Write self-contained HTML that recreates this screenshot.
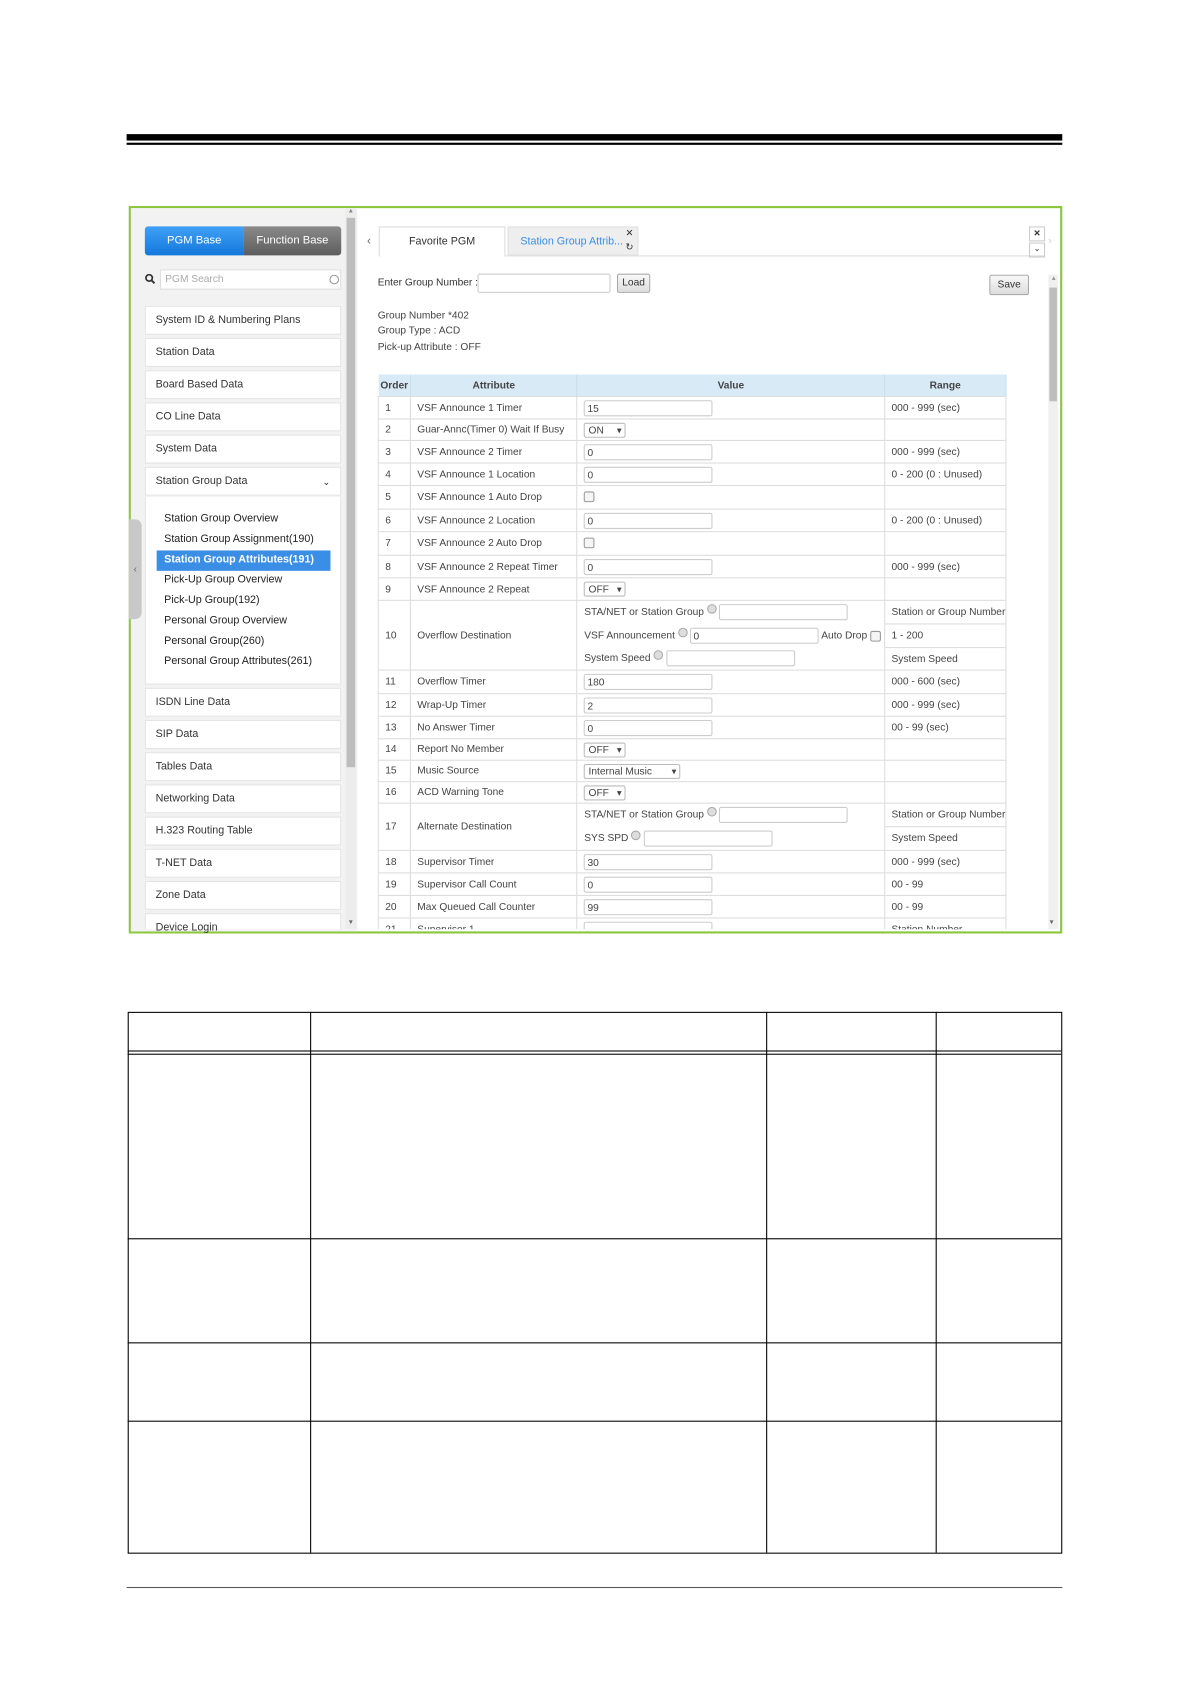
<!DOCTYPE html>
<html><head><meta charset="utf-8"><style>
html,body{margin:0;padding:0;background:#fff;width:1191px;height:1684px;overflow:hidden}
.s{position:absolute;left:0;top:0;width:1110px;height:1570px;transform:scale(1.073);transform-origin:0 0;font-family:"Liberation Sans",Arial,sans-serif;color:#333}
.a{position:absolute}
.mi{position:absolute;left:135px;width:183px;height:27px;background:#fff;border:1px solid #e4e4e4;box-sizing:border-box;font-size:10px;line-height:26px;padding-left:9px;color:#333}
.sub{position:absolute;left:153px;font-size:10px;color:#222}
table.t{position:absolute;left:352px;top:349px;border-collapse:collapse;font-size:9.5px;color:#444;table-layout:fixed}
table.t td{border:1px solid #ddd;padding:0 0 0 6px;white-space:nowrap;overflow:hidden}
table.t th{background:#d9eaf7;font-weight:bold;font-size:9.5px;height:18px;border-right:1px solid #c9dbe8}
.in{display:inline-block;width:120px;height:15px;border:1px solid #ccc;border-radius:2px;vertical-align:middle;font-size:9.5px;line-height:15px;padding-left:2px;box-sizing:border-box;background:#fff}
.sel{display:inline-block;width:39px;height:14px;border:1px solid #bbb;border-radius:2px;vertical-align:middle;font-size:9.5px;line-height:13px;padding-left:3px;box-sizing:border-box;position:relative}
.sel:after{content:"▾";position:absolute;right:3px;top:0;font-size:9px}
.cb{display:inline-block;width:8px;height:8px;border:1px solid #999;border-radius:2px;vertical-align:middle;background:#f5f5f5}
.rd{display:inline-block;width:7px;height:7px;border:1px solid #aaa;border-radius:50%;background:#ddd;vertical-align:top}
.bt{position:absolute;border:1px solid #aaa;background:linear-gradient(#f8f8f8,#ddd);font-size:9.5px;text-align:center;box-sizing:border-box;border-radius:2px}
</style></head><body><div class="s">
<div class="a" style="left:118px;top:125px;width:872px;height:6px;background:#000"></div>
<div class="a" style="left:118px;top:133px;width:872px;height:2px;background:#000"></div>

<div class="a" style="left:120px;top:192px;width:866px;height:674px;border:2px solid #8dc63f;background:#fff"></div>
<div class="a" style="left:122px;top:194px;width:211px;height:674px;background:#f2f2f2"></div>
<div class="a" style="left:120px;top:484px;width:12px;height:93px;background:#c8c8c8;border-radius:0 6px 6px 0;font-size:9px;color:#666;line-height:93px;text-align:center">‹</div>
<div class="a" style="left:322px;top:194px;width:10px;height:672px;background:#ececec"></div>
<div class="a" style="left:323px;top:203px;width:8px;height:512px;background:#bdbdbd"></div>
<div class="a" style="left:324px;top:194px;font-size:6px;color:#888">▲</div>
<div class="a" style="left:324px;top:857px;font-size:6px;color:#666">▼</div>

<div class="a" style="left:135px;top:211px;width:92px;height:27px;background:linear-gradient(#3fa0f5,#1478dc);border-radius:3px 0 0 3px;color:#fff;font-size:10.5px;line-height:27px;text-align:center">PGM Base</div>
<div class="a" style="left:227px;top:211px;width:91px;height:27px;background:linear-gradient(#8a8a8a,#5d5d5d);border-radius:0 3px 3px 0;color:#fff;font-size:10.5px;line-height:27px;text-align:center">Function Base</div>

<svg class="a" style="left:135px;top:255px" width="10" height="10" viewBox="0 0 10 10"><circle cx="4" cy="4" r="3" fill="none" stroke="#333" stroke-width="1.6"/><path d="M6 6L9 9" stroke="#333" stroke-width="1.8"/></svg>
<div class="a" style="left:149px;top:251px;width:169px;height:19px;background:#fff;border:1px solid #ddd;box-sizing:border-box;font-size:9.5px;line-height:18px;color:#aaa;padding-left:4px">PGM Search</div>
<div class="a" style="left:307px;top:256px;width:7px;height:7px;border:1.5px solid #999;border-radius:50%"></div>

<div class="mi" style="top:285px">System ID &amp; Numbering Plans</div>
<div class="mi" style="top:315px">Station Data</div>
<div class="mi" style="top:345px">Board Based Data</div>
<div class="mi" style="top:375px">CO Line Data</div>
<div class="mi" style="top:405px">System Data</div>
<div class="mi" style="top:435px">Station Group Data<span style="position:absolute;right:9px;top:0;font-size:9px">⌄</span></div>
<div class="a" style="left:135px;top:463px;width:183px;height:175px;background:#fff;border:1px solid #e4e4e4;border-top:none;box-sizing:border-box"></div>
<div class="sub" style="top:478px">Station Group Overview</div>
<div class="sub" style="top:497px">Station Group Assignment(190)</div>
<div class="a" style="left:146px;top:513px;width:162px;height:19px;background:#3a8ee6"></div>
<div class="sub" style="top:516px;color:#fff;font-weight:bold">Station Group Attributes(191)</div>
<div class="sub" style="top:535px">Pick-Up Group Overview</div>
<div class="sub" style="top:554px">Pick-Up Group(192)</div>
<div class="sub" style="top:573px">Personal Group Overview</div>
<div class="sub" style="top:592px">Personal Group(260)</div>
<div class="sub" style="top:611px">Personal Group Attributes(261)</div>
<div class="mi" style="top:641px">ISDN Line Data</div>
<div class="mi" style="top:671px">SIP Data</div>
<div class="mi" style="top:701px">Tables Data</div>
<div class="mi" style="top:731px">Networking Data</div>
<div class="mi" style="top:761px">H.323 Routing Table</div>
<div class="mi" style="top:791px">T-NET Data</div>
<div class="mi" style="top:821px">Zone Data</div>
<div class="mi" style="top:851px;height:15px;border-bottom:none">Device Login</div>

<div class="a" style="left:342px;top:219px;font-size:11px;color:#666">‹</div>
<div class="a" style="left:353px;top:238px;width:620px;height:1px;background:#ddd"></div>
<div class="a" style="left:353px;top:211px;width:118px;height:28px;background:#fff;border:1px solid #ddd;border-bottom:none;box-sizing:border-box;font-size:10px;line-height:27px;text-align:center;color:#333">Favorite PGM</div>
<div class="a" style="left:473px;top:211px;width:122px;height:27px;background:#eee;border:1px solid #e2e2e2;box-sizing:border-box;font-size:10px;line-height:27px;padding-left:11px;color:#3a8ee6">Station Group Attrib...</div>
<div class="a" style="left:583px;top:212px;font-size:9px;color:#333">✕</div>
<div class="a" style="left:583px;top:225px;font-size:9px;color:#333">↻</div>
<div class="a" style="left:959px;top:211px;width:13px;height:12px;border:1px solid #ccc;font-size:8px;text-align:center;line-height:12px;font-weight:bold">✕</div>
<div class="a" style="left:959px;top:226px;width:13px;height:12px;border:1px solid #ccc;font-size:8px;text-align:center;line-height:10px">⌄</div>
<div class="a" style="left:977px;top:219px;font-size:9px;color:#ccc">›</div>

<div class="a" style="left:352px;top:258px;font-size:9.5px">Enter Group Number :</div>
<div class="a" style="left:445px;top:255px;width:122px;height:16px;border:1px solid #ccc;border-radius:2px"></div>
<div class="bt" style="left:575px;top:255px;width:31px;height:18px;line-height:16px">Load</div>
<div class="bt" style="left:922px;top:256px;width:37px;height:19px;line-height:17px">Save</div>
<div class="a" style="left:977px;top:256px;width:9px;height:610px;background:#f0f0f0"></div>
<div class="a" style="left:978px;top:268px;width:7px;height:106px;background:#bdbdbd"></div>

<div class="a" style="left:352px;top:288px;font-size:9.5px;line-height:14.3px;color:#444">Group Number *402<br>Group Type : ACD<br>Pick-up Attribute : OFF</div>

<div class="a" style="left:352px;top:349px;width:586px;height:517px;overflow:hidden">
<table class="t" style="left:0;top:0">
<colgroup><col style="width:30px"><col style="width:158px"><col style="width:287px"><col style="width:111px"></colgroup>
<tr><th style="text-align:left;padding-left:2px">Order</th><th>Attribute</th><th>Value</th><th>Range</th></tr>
<tr style="height:21px"><td>1</td><td>VSF Announce 1 Timer</td><td><span class="in">15</span></td><td>000 - 999 (sec)</td></tr>
<tr style="height:20px"><td>2</td><td>Guar-Annc(Timer 0) Wait If Busy</td><td><span class="sel">ON</span></td><td></td></tr>
<tr style="height:21px"><td>3</td><td>VSF Announce 2 Timer</td><td><span class="in">0</span></td><td>000 - 999 (sec)</td></tr>
<tr style="height:21px"><td>4</td><td>VSF Announce 1 Location</td><td><span class="in">0</span></td><td>0 - 200 (0 : Unused)</td></tr>
<tr style="height:22px"><td>5</td><td>VSF Announce 1 Auto Drop</td><td><span class="cb"></span></td><td></td></tr>
<tr style="height:21px"><td>6</td><td>VSF Announce 2 Location</td><td><span class="in">0</span></td><td>0 - 200 (0 : Unused)</td></tr>
<tr style="height:22px"><td>7</td><td>VSF Announce 2 Auto Drop</td><td><span class="cb"></span></td><td></td></tr>
<tr style="height:21px"><td>8</td><td>VSF Announce 2 Repeat Timer</td><td><span class="in">0</span></td><td>000 - 999 (sec)</td></tr>
<tr style="height:21px"><td>9</td><td>VSF Announce 2 Repeat</td><td><span class="sel">OFF</span></td><td></td></tr>
<tr style="height:22px"><td rowspan="3">10</td><td rowspan="3">Overflow Destination</td><td style="border-bottom:none">STA/NET or Station Group <span class="rd"></span> <span class="in" style="width:120px"></span></td><td>Station or Group Number</td></tr>
<tr style="height:22px"><td style="border-top:none;border-bottom:none">VSF Announcement <span class="rd"></span> <span class="in">0</span> Auto Drop <span class="cb"></span></td><td>1 - 200</td></tr>
<tr style="height:21px"><td style="border-top:none">System Speed <span class="rd"></span> <span class="in"></span></td><td>System Speed</td></tr>
<tr style="height:22px"><td>11</td><td>Overflow Timer</td><td><span class="in">180</span></td><td>000 - 600 (sec)</td></tr>
<tr style="height:21px"><td>12</td><td>Wrap-Up Timer</td><td><span class="in">2</span></td><td>000 - 999 (sec)</td></tr>
<tr style="height:21px"><td>13</td><td>No Answer Timer</td><td><span class="in">0</span></td><td>00 - 99 (sec)</td></tr>
<tr style="height:20px"><td>14</td><td>Report No Member</td><td><span class="sel">OFF</span></td><td></td></tr>
<tr style="height:20px"><td>15</td><td>Music Source</td><td><span class="sel" style="width:90px">Internal Music</span></td><td></td></tr>
<tr style="height:20px"><td>16</td><td>ACD Warning Tone</td><td><span class="sel">OFF</span></td><td></td></tr>
<tr style="height:22px"><td rowspan="2">17</td><td rowspan="2">Alternate Destination</td><td style="border-bottom:none">STA/NET or Station Group <span class="rd"></span> <span class="in"></span></td><td>Station or Group Number</td></tr>
<tr style="height:22px"><td style="border-top:none">SYS SPD <span class="rd"></span> <span class="in"></span></td><td>System Speed</td></tr>
<tr style="height:21px"><td>18</td><td>Supervisor Timer</td><td><span class="in">30</span></td><td>000 - 999 (sec)</td></tr>
<tr style="height:21px"><td>19</td><td>Supervisor Call Count</td><td><span class="in">0</span></td><td>00 - 99</td></tr>
<tr style="height:21px"><td>20</td><td>Max Queued Call Counter</td><td><span class="in">99</span></td><td>00 - 99</td></tr>
<tr style="height:21px"><td>21</td><td>Supervisor 1</td><td><span class="in"></span></td><td>Station Number</td></tr>
</table></div>
<div class="a" style="left:977px;top:857px;font-size:6px;color:#666">▼</div>
<div class="a" style="left:979px;top:257px;font-size:6px;color:#999">▲</div>

<div class="a" style="left:119px;top:943px;width:869px;height:503px;border:1px solid #000"></div>
<div class="a" style="left:119px;top:979px;width:870px;height:1px;background:#000"></div>
<div class="a" style="left:119px;top:982px;width:870px;height:1px;background:#000"></div>
<div class="a" style="left:289px;top:943px;width:1px;height:504px;background:#000"></div>
<div class="a" style="left:714px;top:943px;width:1px;height:504px;background:#000"></div>
<div class="a" style="left:872px;top:943px;width:1px;height:504px;background:#000"></div>
<div class="a" style="left:119px;top:1154px;width:870px;height:1px;background:#000"></div>
<div class="a" style="left:119px;top:1251px;width:870px;height:1px;background:#000"></div>
<div class="a" style="left:119px;top:1324px;width:870px;height:1px;background:#000"></div>
<div class="a" style="left:118px;top:1479px;width:872px;height:1px;background:#555"></div>
</div></body></html>
